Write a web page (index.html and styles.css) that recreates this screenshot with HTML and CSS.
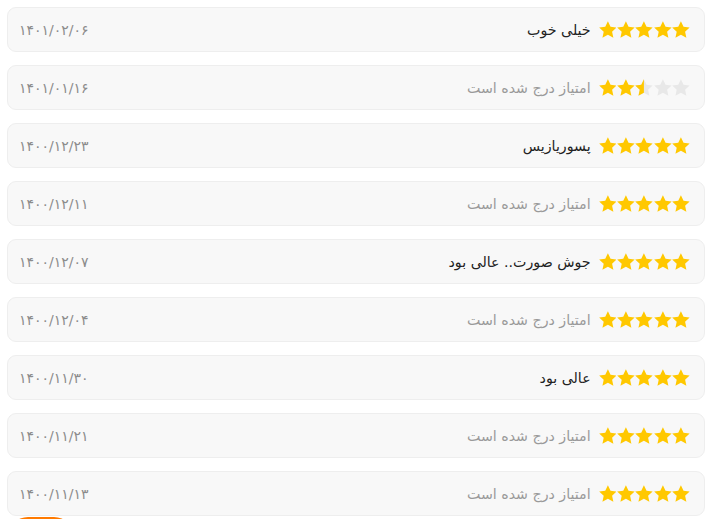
FILE: index.html
```html
<!DOCTYPE html>
<html lang="fa" dir="rtl">
  <head>
    <meta charset="utf-8">
    <title>نظرات</title>
    <link rel="stylesheet" href="styles.css">
  </head>
  <body>
    <svg class="defs" width="0" height="0">
      <defs>
        <clipPath id="half"><rect x="0" y="0" width="12" height="24"></rect></clipPath>
        <path id="star" d="M12 1.8l3.1 6.6 7.1.8-5.3 4.9 1.5 7.1L12 17.6l-6.4 3.6 1.5-7.1L1.8 9.2l7.1-.8z"></path>
      </defs>
    </svg>
    <div class="list" id="list"></div>
    <button class="fab" aria-label="ثبت نظر"></button>
    <script>
      const reviews = [
        { rate: 5, text: 'خیلی خوب', date: '۱۴۰۱/۰۲/۰۶' },
        { rate: 2.5, text: '', date: '۱۴۰۱/۰۱/۱۶' },
        { rate: 5, text: 'پسوریازیس', date: '۱۴۰۰/۱۲/۲۳' },
        { rate: 5, text: '', date: '۱۴۰۰/۱۲/۱۱' },
        { rate: 5, text: 'جوش صورت.. عالی بود', date: '۱۴۰۰/۱۲/۰۷' },
        { rate: 5, text: '', date: '۱۴۰۰/۱۲/۰۴' },
        { rate: 5, text: 'عالی بود', date: '۱۴۰۰/۱۱/۳۰' },
        { rate: 5, text: '', date: '۱۴۰۰/۱۱/۲۱' },
        { rate: 5, text: '', date: '۱۴۰۰/۱۱/۱۳' }
      ];

      // Build one star svg: full, half or empty
      function star(fill) {
        let inner = '<use href="#star" class="empty"></use>';
        if (fill === 1) inner = '<use href="#star" class="full"></use>';
        if (fill === 0.5) inner += '<use href="#star" class="full" clip-path="url(#half)"></use>';
        return '<svg class="star" viewBox="1.6 1.6 20.8 20.8">' + inner + '</svg>';
      }

      const list = document.getElementById('list');
      reviews.forEach(r => {
        const row = document.createElement('div');
        row.className = 'row';
        let stars = '';
        for (let i = 1; i <= 5; i++) {
          stars += star(r.rate >= i ? 1 : (r.rate >= i - 0.5 ? 0.5 : 0));
        }
        const text = r.text
          ? '<span class="comment">' + r.text + '</span>'
          : '<span class="comment muted">امتیاز درج شده است</span>';
        row.innerHTML = '<div class="stars">' + stars + '</div>' + text +
          '<span class="date">' + r.date + '</span>';
        list.appendChild(row);
      });
    </script>
  </body>
</html>
```
FILE: styles.css
```css
html {
font-size: 14px;
}

body {
font-family: "DejaVu Sans", "Noto Sans", sans-serif;
margin: 0;
padding: 0;
background-color: #ffffff;
color: #222222;
}

.defs {
position: absolute;
}

.list {
display: flex;
flex-direction: column;
gap: 13px;
padding: 7px 5px 0 7px;
}

.row {
display: flex;
align-items: center;
height: 43px;
padding: 0 14px 0 11px;
background-color: #f8f8f8;
border: 1px solid #eeeeee;
border-radius: 9px;
}

.stars {
display: flex;
direction: ltr;
gap: 0.6px;
}

.star {
width: 17.8px;
height: 17.8px;
}

.star .full {
fill: #ffc800;
}

.star .empty {
fill: #e8e8e8;
}

.comment {
margin-right: 8px;
font-size: 14.2px;
color: #222222;
}

.comment.muted {
color: #9a9a9a;
}

.date {
margin-right: auto;
font-size: 14px;
color: #8c8c8c;
}

.fab {
display: block;
width: 66px;
height: 40px;
margin: 1px auto 0 8px;
border: none;
border-radius: 20px;
background-color: #ff7a00;
}
```
